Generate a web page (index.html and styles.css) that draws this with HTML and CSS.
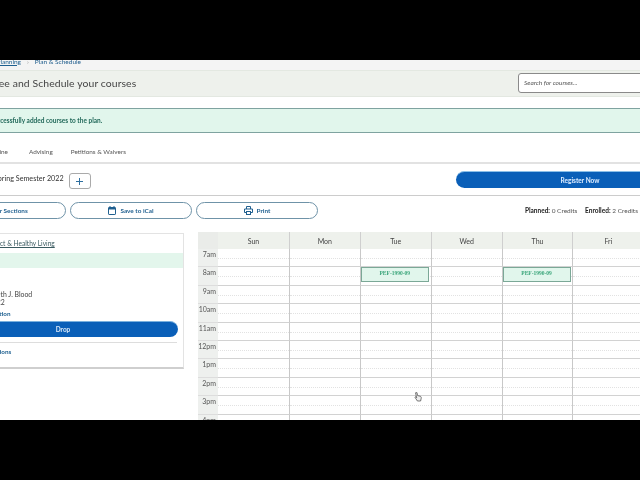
FILE: index.html
```html
<!DOCTYPE html>
<html lang="en">
<head>
<meta charset="utf-8">
<title>Plan &amp; Schedule</title>
<link rel="stylesheet" href="styles.css">
</head>
<body>
<div class="frame">
<div class="page">
  <nav class="crumbs"><a class="crumb-link" href="#">Academic Planning</a><span class="crumb-sep">›</span><span class="crumb-now">Plan &amp; Schedule</span></nav>
  <header class="head">
    <h1 class="title">See and Schedule your courses</h1>
    <div class="search">Search for courses...</div>
  </header>
  <div class="alert">Successfully added courses to the plan.</div>
  <div class="tabs"><span class="tab tab-first">Timeline</span><span class="tab">Advising</span><span class="tab">Petitions &amp; Waivers</span></div>
  <div class="semester">
    <span class="sem-name">Spring Semester 2022</span>
    <button class="add"><svg width="7" height="7" viewBox="0 0 7 7"><path d="M3.5 0v7M0 3.5h7" stroke="#2f6f9f" stroke-width="1"/></svg></button>
    <button class="register">Register Now</button>
  </div>
  <div class="actions">
    <button class="pill pill-first">Filter Sections</button>
    <button class="pill"><svg width="8" height="9" viewBox="0 0 8 9"><rect x=".5" y="1.5" width="7" height="7" rx=".6" fill="none" stroke="#1f5f8f"/><path d="M.5 1.5h7v2h-7z" fill="#1f5f8f"/><path d="M2 0v2M6 0v2" stroke="#1f5f8f"/></svg>Save to iCal</button>
    <button class="pill"><svg width="9" height="9" viewBox="0 0 9 9"><path d="M2.5 3V.5h4V3M2.5 6.5h-2V3h8v3.5h-2" fill="none" stroke="#1f5f8f"/><rect x="2.5" y="5.5" width="4" height="3" fill="none" stroke="#1f5f8f"/></svg>Print</button>
    <div class="credits"><b>Planned:</b> 0 Credits <b class="enrolled">Enrolled:</b> 2 Credits</div>
  </div>
  <main class="main">
    <section class="card">
      <a class="card-title" href="#">PEF-1990 Phys. Act &amp; Healthy Living</a>
      <div class="band"></div>
      <div class="card-body">
        <p class="line">Instructor: Kenneth J. Blood</p>
        <p class="line">Jan 10 - May 2022</p>
        <a class="card-link loc" href="#">View Section Location</a>
        <button class="drop">Drop</button>
        <a class="card-link opts" href="#">Other Section Options</a>
      </div>
    </section>
    <section class="cal">
      <div class="cal-head"><div class="corner"></div><div class="day">Sun</div><div class="day">Mon</div><div class="day">Tue</div><div class="day">Wed</div><div class="day">Thu</div><div class="day">Fri</div><div class="day">Sat</div></div>
      <div class="row"><div class="time">7am</div><div class="cell"></div><div class="cell"></div><div class="cell"></div><div class="cell"></div><div class="cell"></div><div class="cell"></div><div class="cell"></div></div>
      <div class="row"><div class="time">8am</div><div class="cell"></div><div class="cell"></div><div class="cell"><div class="event">PEF-1990-09</div></div><div class="cell"></div><div class="cell"><div class="event">PEF-1990-09</div></div><div class="cell"></div><div class="cell"></div></div>
      <div class="row"><div class="time">9am</div><div class="cell"></div><div class="cell"></div><div class="cell"></div><div class="cell"></div><div class="cell"></div><div class="cell"></div><div class="cell"></div></div>
      <div class="row"><div class="time">10am</div><div class="cell"></div><div class="cell"></div><div class="cell"></div><div class="cell"></div><div class="cell"></div><div class="cell"></div><div class="cell"></div></div>
      <div class="row"><div class="time">11am</div><div class="cell"></div><div class="cell"></div><div class="cell"></div><div class="cell"></div><div class="cell"></div><div class="cell"></div><div class="cell"></div></div>
      <div class="row"><div class="time">12pm</div><div class="cell"></div><div class="cell"></div><div class="cell"></div><div class="cell"></div><div class="cell"></div><div class="cell"></div><div class="cell"></div></div>
      <div class="row"><div class="time">1pm</div><div class="cell"></div><div class="cell"></div><div class="cell"></div><div class="cell"></div><div class="cell"></div><div class="cell"></div><div class="cell"></div></div>
      <div class="row"><div class="time">2pm</div><div class="cell"></div><div class="cell"></div><div class="cell"></div><div class="cell"></div><div class="cell"></div><div class="cell"></div><div class="cell"></div></div>
      <div class="row"><div class="time">3pm</div><div class="cell"></div><div class="cell"></div><div class="cell"></div><div class="cell"></div><div class="cell"></div><div class="cell"></div><div class="cell"></div></div>
      <div class="row"><div class="time">4pm</div><div class="cell"></div><div class="cell"></div><div class="cell"></div><div class="cell"></div><div class="cell"></div><div class="cell"></div><div class="cell"></div></div>
    </section>
  </main>
</div>
<svg class="cursor" width="8" height="10" viewBox="0 0 8 10"><path d="M1.5.8 3 .6l.6 3 2.6.6c1 .4 1.2 1.2 1 2.2L6.6 9H3.4L.9 5.2l.8-.5 1 1z" fill="#eee" stroke="#444" stroke-width=".7"/></svg>
</div>
</body>
</html>
```
FILE: styles.css
```css
* { box-sizing: border-box; }
html, body { margin: 0; background: #000; }
body { height: 480px; overflow: hidden; padding-top: 60px; font-family: Lato, "Noto Sans", sans-serif; color: #333; }
.frame { position: relative; width: 640px; height: 360px; overflow: hidden; background: #fff; filter: blur(.35px); }
.page { width: 770px; margin: -8px 0 0 -60px; }
a { text-decoration: none; }
p { margin: 0; }
button { font-family: inherit; cursor: pointer; }

.crumbs { height: 18px; display: flex; align-items: center; padding-left: 20px; font-size: 6.5px; color: #24608f; background: #f4f4f4; }
.crumb-link { color: #1d5f8f; text-decoration: underline; width: 61px; text-align: right; white-space: nowrap; }
.crumb-sep { margin: 0 6px; color: #999; }
.head { height: 27px; padding: 0 0 2px 53px; display: flex; align-items: center; justify-content: space-between; background: #eef1ec; border-top: 1px solid #e3e8e1; border-bottom: 1px solid #e3e8e1; }
.title { margin: 0; font-size: 10.4px; font-weight: 400; letter-spacing: .1px; color: #444; }
.search { width: 192px; height: 20px; padding-left: 5px; display: flex; align-items: center; background: #fff; border: 1px solid #8a8a8a; border-radius: 3px; font-size: 6.5px; font-style: italic; color: #555; }
.alert { height: 25px; margin-top: 11px; padding-left: 50px; display: flex; align-items: center; background: #e1f6ec; border-top: 1px solid #7fa3a0; border-bottom: 1px solid #7fa3a0; font-size: 6.5px; font-weight: 700; color: #22695a; }
.tabs { height: 31px; padding: 8px 0 0 44px; display: flex; align-items: center; gap: 18px; border-bottom: 2px solid #e2e2e2; font-size: 6.4px; color: #555; }
.tab-first { margin-right: 3px; }
.semester { height: 32px; padding: 7px 6px 0 54px; display: flex; align-items: flex-start; border-bottom: 1px solid #ccc; }
.sem-name { height: 16px; line-height: 16px; font-size: 7.2px; color: #333; }
.add { width: 22px; height: 16px; margin: 2px 0 0 5px; padding: 0; display: flex; align-items: center; justify-content: center; background: #fff; border: 1px solid #aaa; border-radius: 3px; }
.register { width: 248px; height: 17px; margin-left: auto; padding: 0; background: #0a5fb8; color: #dfeeff; border: 0; border-top: 1px solid #8cc0e8; border-radius: 9px; font-size: 6.5px; font-weight: 700; }
.actions { height: 17px; margin-top: 6px; padding: 0 72px 0 4px; display: flex; align-items: center; gap: 4px; }
.pill { width: 122px; height: 17px; padding: 0; display: flex; align-items: center; justify-content: center; gap: 4px; background: #fff; border: 1px solid #6f93a8; border-radius: 9px; color: #1f5f8f; font-size: 6.4px; font-weight: 700; }
.pill-first { padding-left: 5px; }
.credits { margin-left: auto; font-size: 6.5px; color: #555; }
.credits b { color: #222; }
.enrolled { margin-left: 6px; }
.main { display: flex; align-items: flex-start; gap: 14px; margin-top: 13px; }
.card { width: 244px; height: 136px; margin-top: 1px; background: #fff; border: 1px solid #e3e3e3; border-bottom: 2px solid #cfcfcf; flex: none; }
.card-title { display: block; height: 19px; padding: 5px 0 0 7px; font-size: 6.6px; line-height: 9px; color: #3a5a60; text-decoration: underline; white-space: nowrap; }
.band { height: 15px; background: #e3f6ec; }
.card-body { padding: 22px 6px 0 7px; }
.line { font-size: 6.9px; line-height: 8px; color: #444; white-space: nowrap; }
.card-link { display: block; font-size: 6.3px; font-weight: 700; color: #1d5f8f; line-height: 8px; white-space: nowrap; }
.loc { margin-top: 4px; }
.drop { display: block; width: 230px; height: 16px; margin-top: 3px; padding: 0; background: #0a5fb8; color: #d8e8f8; border: 0; border-top: 1px solid #7ab0de; border-radius: 8px; font-size: 6.5px; font-weight: 700; }
.opts { margin-top: 5px; padding-top: 5px; border-top: 1px solid #ddd; }
.cal { width: 517px; flex: none; }
.cal-head, .row { display: grid; grid-template-columns: 20px repeat(7, 70.9px); }
.corner { background: #eaece9; }
.day { height: 17px; display: flex; align-items: center; justify-content: center; background: #eef1ec; border-left: 1px solid #cfcfcf; font-size: 7px; color: #444; }
.corner + .day { border-left: 0; }
.row { height: 18.4px; }
.time { padding: 1px 2px 0 0; background: #eef0ee; border-bottom: 1px solid #ddd; text-align: right; font-size: 7px; line-height: 9px; color: #555; }
.cell { position: relative; border-left: 1px solid #c8c8c8; border-bottom: 1px solid #d2d2d2; }
.cell::after { content: ""; position: absolute; left: 0; right: 0; top: 9px; border-top: 1px dotted #e2e2e2; }
.time + .cell { border-left: 0; }
.event { position: absolute; z-index: 1; left: 0; top: 0; width: 68px; height: 15px; padding-top: 1px; background: #e1f6ec; border: 1px solid #7ba897; text-align: center; font-family: "Liberation Serif", serif; font-size: 5.5px; font-weight: 700; line-height: 8px; color: #3aa57a; }
.cursor { position: absolute; left: 414px; top: 332px; }
```
